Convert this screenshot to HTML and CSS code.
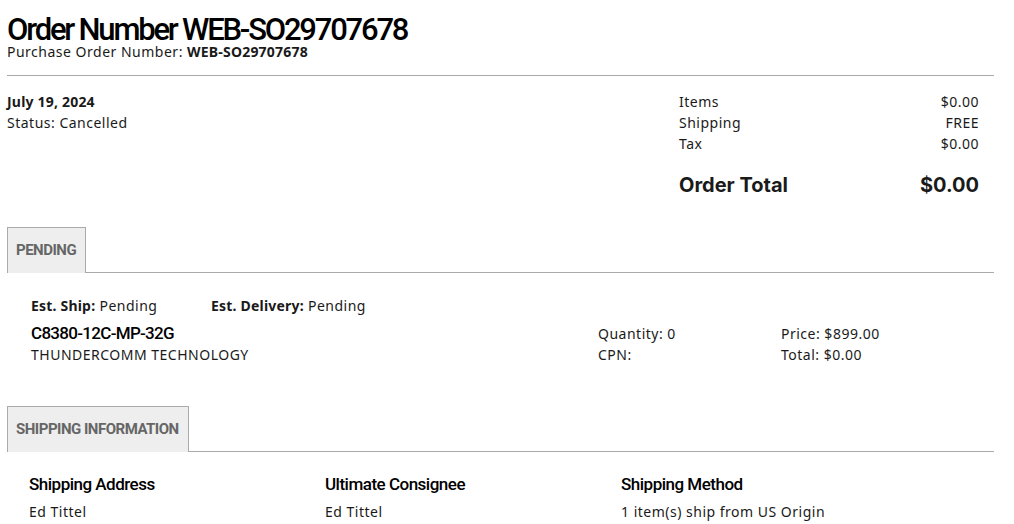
FILE: index.html
```html
<!DOCTYPE html>
<html lang="en">
  <head>
    <meta charset="UTF-8" />
    <meta name="viewport" content="width=device-width, initial-scale=1.0" />
    <title>Order WEB-SO29707678</title>
    <link rel="stylesheet" href="styles.css">
  </head>
  <body>
    <div class="order">
      <div class="order-header">
        <h1>Order Number WEB-SO29707678</h1>
        <p class="po">Purchase Order Number: <strong>WEB-SO29707678</strong></p>
      </div>

      <div class="summary">
        <div class="summary-left">
          <p class="date">July 19, 2024</p>
          <p>Status: Cancelled</p>
        </div>
        <div class="totals">
          <div class="totals-row"><span>Items</span><span>$0.00</span></div>
          <div class="totals-row"><span>Shipping</span><span>FREE</span></div>
          <div class="totals-row"><span>Tax</span><span>$0.00</span></div>
          <div class="totals-row grand"><span>Order Total</span><span>$0.00</span></div>
        </div>
      </div>

      <div class="tab-bar">
        <div class="tab">PENDING</div>
      </div>

      <div class="shipment">
        <div class="est">
          <p class="est-ship"><strong>Est. Ship:</strong> Pending</p>
          <p><strong>Est. Delivery:</strong> Pending</p>
        </div>
        <div class="line-item">
          <div class="part">
            <p class="part-no">C8380-12C-MP-32G</p>
            <p>THUNDERCOMM TECHNOLOGY</p>
          </div>
          <div class="qty">
            <p>Quantity: 0</p>
            <p>CPN:</p>
          </div>
          <div class="price">
            <p>Price: $899.00</p>
            <p>Total: $0.00</p>
          </div>
        </div>
      </div>

      <div class="tab-bar shipping-tab">
        <div class="tab">SHIPPING INFORMATION</div>
      </div>

      <div class="shipping-info">
        <div class="info-col">
          <h3>Shipping Address</h3>
          <p>Ed Tittel</p>
        </div>
        <div class="info-col">
          <h3>Ultimate Consignee</h3>
          <p>Ed Tittel</p>
        </div>
        <div class="info-col">
          <h3>Shipping Method</h3>
          <p>1 item(s) ship from US Origin</p>
        </div>
      </div>
    </div>
  </body>
</html>
```

FILE: styles.css
```css
* {
  margin: 0;
  padding: 0;
  box-sizing: border-box;
}

body {
  font-family: "Noto Sans", "Open Sans", sans-serif;
  font-size: 14px;
  line-height: 21px;
  letter-spacing: 0.5px;
  color: #1a1a1a;
  background-color: white;
}

.order {
  width: 987px;
  margin-left: 7px;
}

h1,
h3,
.tab,
.part-no {
  font-family: "Roboto", "Inter", sans-serif;
}

h1 {
  font-size: 31px;
  line-height: 30px;
  font-weight: 500;
  letter-spacing: -2.2px;
  color: #000;
  padding-top: 15px;
}

.po {
  line-height: 14px;
}

.po strong {
  font-weight: 700;
  letter-spacing: 0.2px;
}

.order-header {
  padding-bottom: 16px;
  border-bottom: 1px solid #aaa;
}

.summary {
  display: flex;
  justify-content: space-between;
  padding-top: 15px;
}

.date {
  font-weight: 700;
  letter-spacing: 0.2px;
}

.totals {
  width: 300px;
  margin-right: 15px;
}

.totals-row {
  display: flex;
  justify-content: space-between;
}

.totals-row.grand {
  font-family: "Inter", sans-serif;
  font-size: 20px;
  font-weight: 700;
  letter-spacing: 0;
  margin-top: 19px;
  line-height: 24px;
}

.tab-bar {
  border-bottom: 1px solid #aaa;
  margin-top: 30px;
}

.tab {
  display: inline-block;
  background-color: #eee;
  border: 1px solid #aaa;
  border-bottom: none;
  height: 46px;
  line-height: 45px;
  padding: 0 9px 0 8px;
  font-size: 15px;
  font-weight: 700;
  color: #666;
  letter-spacing: -0.5px;
  margin-bottom: -1px;
  vertical-align: top;
}

.shipment {
  padding: 22px 0 0 24px;
}

.est {
  display: flex;
}

.est strong {
  letter-spacing: 0.2px;
}

.est-ship {
  width: 180px;
}

.line-item {
  display: flex;
  margin-top: 7px;
}

.part {
  width: 567px;
}

.part-no {
  font-size: 17px;
  font-weight: 500;
  letter-spacing: -0.7px;
  color: #000;
}

.qty {
  width: 183px;
}

.shipping-tab {
  margin-top: 41px;
}

.shipping-info {
  display: flex;
  padding: 21px 0 0 22px;
}

.info-col {
  width: 296px;
}

h3 {
  font-size: 17px;
  font-weight: 500;
  letter-spacing: -0.5px;
  line-height: 22px;
  margin-bottom: 6px;
  color: #000;
}
```
